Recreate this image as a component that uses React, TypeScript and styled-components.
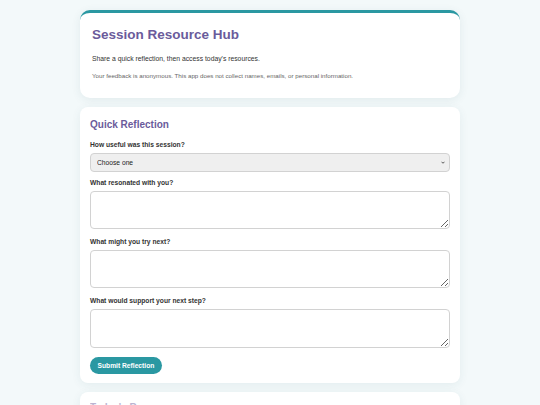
import React from 'react';
import styled, { createGlobalStyle } from 'styled-components';

const GlobalStyle = createGlobalStyle`
   html, body {
      margin: 0;
      padding: 0;
      background: #f3f9fa;
      font-family: "Liberation Sans", Arial, sans-serif;
      color: #2b2b2b;
   }
   * {
      box-sizing: border-box;
   }
`;

const App = () => {
   return (
      <>
         <GlobalStyle />
         <Page>
            <HeaderCard>
               <Title>Session Resource Hub</Title>
               <Intro>Share a quick reflection, then access today's resources.</Intro>
               <Note>Your feedback is anonymous. This app does not collect names, emails, or personal information.</Note>
            </HeaderCard>
            <Card>
               <SectionTitle>Quick Reflection</SectionTitle>
               <Form onSubmit={(e) => e.preventDefault()}>
                  <Field>
                     <Label htmlFor="useful">How useful was this session?</Label>
                     <SelectWrap>
                        <Select id="useful" defaultValue="">
                           <option value="">Choose one</option>
                           <option value="1">Not very useful</option>
                           <option value="2">Somewhat useful</option>
                           <option value="3">Very useful</option>
                        </Select>
                        <Chevron viewBox="0 0 8 5" aria-hidden="true">
                           <path d="M1 1l3 3 3-3" />
                        </Chevron>
                     </SelectWrap>
                  </Field>
                  <Field>
                     <Label htmlFor="resonated">What resonated with you?</Label>
                     <TextArea id="resonated" />
                  </Field>
                  <Field>
                     <Label htmlFor="next">What might you try next?</Label>
                     <TextArea id="next" />
                  </Field>
                  <Field>
                     <Label htmlFor="support">What would support your next step?</Label>
                     <TextArea id="support" $tall />
                  </Field>
                  <SubmitButton type="submit">Submit Reflection</SubmitButton>
               </Form>
            </Card>
            <Card $locked>
               <SectionTitle $muted>Today's Resources</SectionTitle>
            </Card>
         </Page>
      </>
   );
};

export default App;

const Page = styled.main`
   width: 380px;
   margin: 0 auto;
   padding: 10px 0 20px;
   display: flex;
   flex-direction: column;
   gap: 9px;
`;
const HeaderCard = styled.section`
   background: #fff;
   border-top: 3px solid #2a98a2;
   border-radius: 10px;
   padding: 13px 12px 18px;
   box-shadow: 0 2px 10px rgba(40, 90, 100, 0.09);
`;
const Title = styled.h1`
   margin: 0 0 10px;
   font-size: 13.5px;
   font-weight: 700;
   color: #6a5b9b;
   line-height: 18px;
`;
const Intro = styled.p`
   margin: 0 0 8px;
   font-size: 6.8px;
   line-height: 9.5px;
   color: #333;
`;
const Note = styled.p`
   margin: 0;
   font-size: 6.2px;
   line-height: 8.7px;
   color: #666;
`;
const Card = styled.section<{ $locked?: boolean }>`
   background: #fff;
   border-radius: 8px;
   padding: ${(p) => (p.$locked ? '9.5px 10px 10px' : '10.5px 10px 8.5px')};
   box-shadow: 0 2px 10px rgba(40, 90, 100, 0.08);
`;
const SectionTitle = styled.h2<{ $muted?: boolean }>`
   margin: 0 0 10.5px;
   font-size: 10px;
   font-weight: 700;
   color: #6a5b9b;
   line-height: 13px;
   opacity: ${(p) => (p.$muted ? 0.45 : 1)};
`;
const Form = styled.form`
   display: flex;
   flex-direction: column;
   gap: 7px;
`;
const Field = styled.div`
   display: flex;
   flex-direction: column;
   gap: 3.5px;
`;
const Label = styled.label`
   font-size: 6.7px;
   line-height: 8px;
   font-weight: 700;
   color: #333;
`;
const SelectWrap = styled.div`
   position: relative;
   margin-top: 0.5px;
`;
const Select = styled.select`
   display: block;
   width: 100%;
   height: 19px;
   padding: 0 6px;
   font-family: inherit;
   font-size: 6.7px;
   color: #222;
   background: #efefef;
   border: 1px solid #d2d2d2;
   border-radius: 4px;
   appearance: none;
   -webkit-appearance: none;
`;
const Chevron = styled.svg`
   position: absolute;
   right: 5px;
   top: 8px;
   width: 4px;
   height: 3px;
   fill: none;
   stroke: #333;
   stroke-width: 1.6;
   pointer-events: none;
`;
const TextArea = styled.textarea<{ $tall?: boolean }>`
   display: block;
   width: 100%;
   height: ${(p) => (p.$tall ? '39px' : '38px')};
   margin-bottom: 2.5px;
   padding: 4px;
   font-family: inherit;
   font-size: 6.7px;
   background: #fff;
   border: 1px solid #d2d2d2;
   border-radius: 4px;
   resize: vertical;
`;
const SubmitButton = styled.button`
   align-self: flex-start;
   height: 17px;
   padding: 0 7.5px;
   font-family: inherit;
   font-size: 6.7px;
   font-weight: 700;
   color: #fff;
   background: #2a98a2;
   border: none;
   border-radius: 999px;
   cursor: pointer;
`;
